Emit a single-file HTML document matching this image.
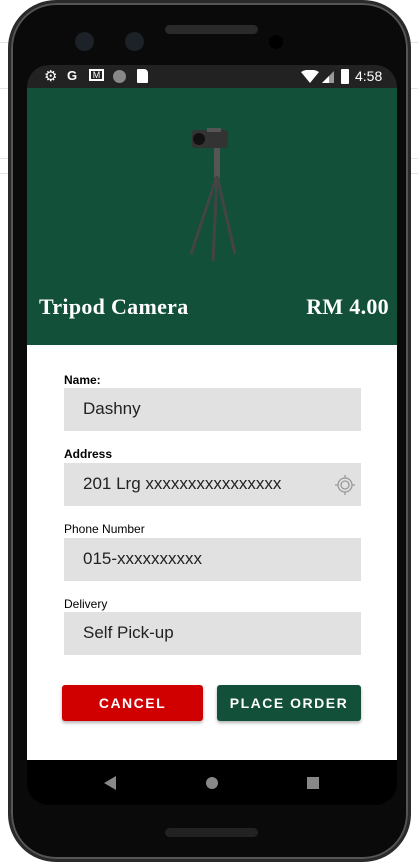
<!DOCTYPE html>
<html><head><style>
*{margin:0;padding:0;box-sizing:border-box}
body{width:418px;height:862px;background:#fff;position:relative;overflow:hidden;font-family:"Liberation Sans",sans-serif}
.line{position:absolute;left:0;right:0;height:1px;background:#e4e4e4}
.phone{position:absolute;left:8px;top:0;width:403px;height:862px;background:#0a0a0a;border-radius:48px;border:3px solid #2a2a2a;box-shadow:0 0 0 2px #555 inset}
.screen{position:absolute;left:27px;top:65px;width:370px;height:740px;border-radius:22px;overflow:hidden;background:#000}
.status{height:23px;background:#222;color:#fff;font-size:13px;position:relative}
.header{height:257px;background:#12503a;position:relative}
.t{position:absolute;color:#fff;font-family:"Liberation Serif",serif;font-weight:bold;font-size:22px;top:206px;letter-spacing:0.3px}
.body{height:415px;background:#fff;position:relative}
.lbl{position:absolute;left:37px;font-size:12px;color:#000}
.fld{position:absolute;left:37px;width:297px;height:43px;background:#e1e1e1;font-size:17px;color:#222;padding:11px 0 0 19px}
.btn{position:absolute;top:340px;height:36px;border-radius:3px;color:#fff;font-size:14px;letter-spacing:1.5px;text-align:center;line-height:36px;font-weight:bold;box-shadow:0 2px 3px rgba(0,0,0,.3)}
.nav{height:45px;background:#000;position:relative}
</style></head><body>
<div class="line" style="top:42px"></div>
<div class="line" style="top:88px"></div>
<div class="line" style="top:158px"></div>
<div class="line" style="top:173px"></div>
<div class="phone"></div>
<div style="position:absolute;left:165px;top:25px;width:93px;height:9px;border-radius:5px;background:#2a2a2a"></div>
<div style="position:absolute;left:75px;top:32px;width:19px;height:19px;border-radius:50%;background:#1c2228"></div>
<div style="position:absolute;left:125px;top:32px;width:19px;height:19px;border-radius:50%;background:#1c2228"></div>
<div style="position:absolute;left:269px;top:35px;width:14px;height:14px;border-radius:50%;background:#000"></div>
<div style="position:absolute;left:165px;top:828px;width:93px;height:9px;border-radius:5px;background:#222"></div>
<div class="screen">
 <div class="status">
  <span style="position:absolute;left:17px;top:2px;font-size:15px">⚙</span>
  <span style="position:absolute;left:40px;top:3px;font-weight:bold">G</span>
  <span style="position:absolute;left:62px;top:4px;width:15px;height:12px;border:2px solid #fff;font-size:9px;line-height:8px;text-align:center">M</span>
  <span style="position:absolute;left:86px;top:5px;width:13px;height:13px;border-radius:50%;background:#888"></span>
  <span style="position:absolute;left:110px;top:4px;width:11px;height:14px;background:#fff;border-radius:1px 4px 1px 1px"></span>
  <svg style="position:absolute;left:274px;top:5px" width="40" height="14"><path d="M0 2 Q9 -3 18 2 L9 13Z" fill="#fff"/><path d="M21 13 L33 1 V13Z" fill="#999"/><path d="M21 13 L28 6 V13Z" fill="#fff"/></svg>
  <span style="position:absolute;left:314px;top:4px;width:8px;height:15px;background:#fff;border-radius:1px"></span>
  <span style="position:absolute;left:328px;top:3px;font-size:14px">4:58</span>
 </div>
 <div class="header">
  <svg style="position:absolute;left:150px;top:38px" width="70" height="140">
   <rect x="15" y="4" width="36" height="18" rx="3" fill="#333"/><circle cx="22" cy="13" r="6" fill="#111"/><rect x="30" y="2" width="14" height="4" fill="#555"/>
   <rect x="37" y="22" width="6" height="30" fill="#555"/>
   <g stroke="#444" stroke-width="3"><line x1="40" y1="50" x2="14" y2="128"/><line x1="40" y1="50" x2="36" y2="135"/><line x1="40" y1="50" x2="58" y2="128"/></g>
  </svg>
  <div class="t" style="left:12px">Tripod Camera</div>
  <div class="t" style="right:8px">RM 4.00</div>
 </div>
 <div class="body">
  <div class="lbl" style="top:28px;font-weight:bold">Name:</div>
  <div class="fld" style="top:43px">Dashny</div>
  <div class="lbl" style="top:102px;font-weight:bold">Address</div>
  <div class="fld" style="top:118px">201 Lrg xxxxxxxxxxxxxxxx
   <svg style="position:absolute;right:4px;top:10px" width="24" height="24" fill="none" stroke="#999" stroke-width="1.3"><circle cx="12" cy="12" r="7"/><circle cx="12" cy="12" r="4"/><path d="M12 2v3M12 19v3M2 12h3M19 12h3"/></svg>
  </div>
  <div class="lbl" style="top:177px">Phone Number</div>
  <div class="fld" style="top:193px">015-xxxxxxxxxx</div>
  <div class="lbl" style="top:252px">Delivery</div>
  <div class="fld" style="top:267px">Self Pick-up</div>
  <div class="btn" style="left:35px;width:141px;background:#d00000">CANCEL</div>
  <div class="btn" style="left:190px;width:144px;background:#12503a">PLACE ORDER</div>
 </div>
 <div class="nav">
  <svg style="position:absolute;left:0;top:0" width="370" height="45"><path d="M77 23 L89 16 V30Z" fill="#888"/><circle cx="185" cy="23" r="6" fill="#888"/><rect x="280" y="17" width="12" height="12" fill="#888"/></svg>
 </div>
</div>
</body></html>
